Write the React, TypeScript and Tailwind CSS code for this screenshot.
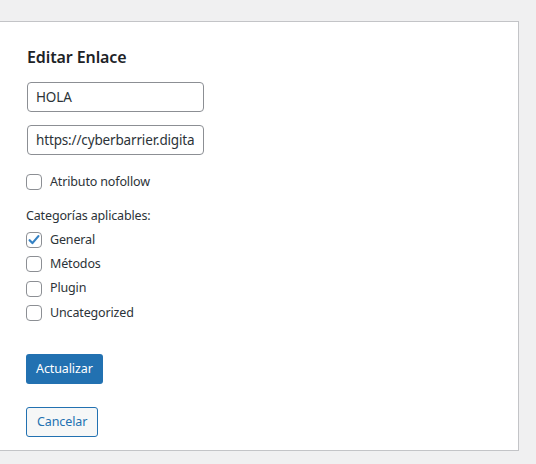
const font = { fontFamily: '"Noto Sans", "Open Sans", sans-serif' };

function Check({ checked, label }: { checked?: boolean; label: string }) {
  return (
    <label className="flex items-center gap-2 h-[16px] text-[12.5px] tracking-[-0.15px] text-[#2c3338]">
      <span className="w-4 h-4 rounded-[4px] border border-[#8c8f94] bg-white flex items-center justify-center shrink-0">
        {checked && (
          <svg width="14" height="14" viewBox="0 0 14 14">
            <path d="M2.6 7.2l2.8 2.9 6-7" fill="none" stroke="#3582c4" strokeWidth="2.2" strokeLinecap="round" strokeLinejoin="round" />
          </svg>
        )}
      </span>
      <span>{label}</span>
    </label>
  );
}

export default function App() {
  return (
    <div className="min-h-[464px] bg-[#f0f0f1] pt-[21px]" style={font}>
      <div className="w-[519px] h-[430px] bg-white border-t border-r border-b border-[#c3c4c7] pl-[26px] pt-[24px]">
        <h2 className="text-[16px] font-semibold text-[#1d2327] leading-[22px] pl-px tracking-[-0.1px]">Editar Enlace</h2>
        <div className="mt-[14px] flex flex-col gap-[13px] w-[178px] pl-px">
          <input
            defaultValue="HOLA"
            className="h-[30px] w-full rounded-[4px] border border-[#8c8f94] px-2 text-[13.5px] tracking-[-0.15px] text-[#2c3338] outline-none"
          />
          <input
            defaultValue="https://cyberbarrier.digital/"
            className="h-[30px] w-full rounded-[4px] border border-[#8c8f94] px-2 text-[13.5px] tracking-[-0.15px] text-[#2c3338] outline-none"
          />
        </div>
        <div className="mt-[19px]">
          <Check label="Atributo nofollow" />
        </div>
        <p className="mt-[17px] text-[12.5px] tracking-[-0.15px] leading-[18px] text-[#2c3338]">Categorías aplicables:</p>
        <div className="mt-[7px] flex flex-col gap-[8.3px]">
          <Check checked label="General" />
          <Check label="Métodos" />
          <Check label="Plugin" />
          <Check label="Uncategorized" />
        </div>
        <div className="mt-[33px] flex flex-col items-start gap-[23px]">
          <button className="h-[30px] px-[10px] rounded-[3px] bg-[#2271b1] text-white text-[12.5px] tracking-[-0.1px]">Actualizar</button>
          <button className="h-[30px] px-[10px] rounded-[3px] border border-[#2271b1] bg-[#f6f7f7] text-[#2271b1] text-[12.5px] tracking-[-0.1px]">Cancelar</button>
        </div>
      </div>
    </div>
  );
}
